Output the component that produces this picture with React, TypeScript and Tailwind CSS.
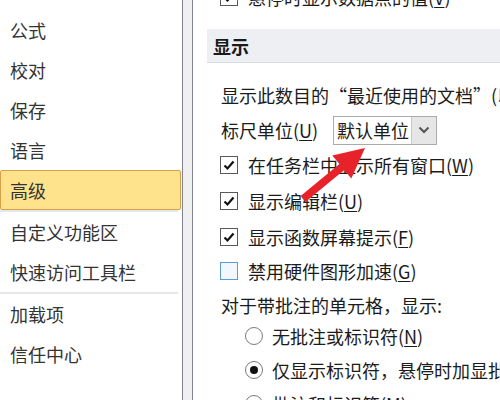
import React from "react";

const navGroups = [
  ["公式", "校对", "保存", "语言", "高级"],
  ["自定义功能区", "快速访问工具栏"],
  ["加载项", "信任中心"],
];

const Hotkey = ({ k }: { k: string }) => (
  <>
    (<span className="underline underline-offset-2">{k}</span>)
  </>
);

const CheckBox = ({ checked }: { checked: boolean }) =>
  checked ? (
    <span className="flex h-[18px] w-[18px] shrink-0 items-center justify-center border border-[#5a5a5a] bg-white">
      <svg width="12" height="12" viewBox="0 0 12 12">
        <path d="M1.5 6.5 L4.5 9.5 L10.5 2.5" fill="none" stroke="#111" strokeWidth="2.2" />
      </svg>
    </span>
  ) : (
    <span className="h-[18px] w-[18px] shrink-0 border border-[#5b9bd5] bg-[#f2f7fd]" />
  );

const Radio = ({ on }: { on?: boolean }) => (
  <span className="flex h-[18px] w-[18px] shrink-0 items-center justify-center rounded-full border border-[#7a7a7a] bg-white">
    {on && <span className="h-[8px] w-[8px] rounded-full bg-[#111]" />}
  </span>
);

function CheckRow({ checked, children }: { checked: boolean; children: React.ReactNode }) {
  return (
    <div className="flex h-[36px] items-center gap-[10px] pl-[27px]">
      <CheckBox checked={checked} />
      <span className="whitespace-nowrap">{children}</span>
    </div>
  );
}

function RadioRow({ on, children }: { on?: boolean; children: React.ReactNode }) {
  return (
    <div className="flex h-[34px] items-center gap-[9px] pl-[52px]">
      <Radio on={on} />
      <span className="whitespace-nowrap">{children}</span>
    </div>
  );
}

export default function App() {
  return (
    <div
      className="relative flex h-[400px] w-[500px] overflow-hidden bg-white text-[18px] leading-none text-[#1b1b1b]"
      style={{ fontFamily: '"Noto Sans CJK SC", "Noto Sans", sans-serif' }}
    >
      {/* left nav */}
      <div className="w-[182px] shrink-0 pt-[10px]">
        {navGroups.map((group, gi) => (
          <div key={gi}>
            {gi > 0 && <div className="mr-[4px] h-[2px] bg-[#e6e7ea]" />}
            {group.map((item) => (
              <div
                key={item}
                className={
                  item === "高级"
                    ? "mr-[1px] flex h-[40px] items-center rounded-[2px] border border-[#d9a04a] bg-[#ffe38c] pl-[9px] text-[#333]"
                    : "flex h-[40px] items-center pl-[10px] text-[#333]"
                }
              >
                {item}
              </div>
            ))}
          </div>
        ))}
      </div>

      {/* splitter */}
      <div className="w-[11px] shrink-0 border-x border-[#80848c] bg-[#f0f0f0]" />

      {/* options */}
      <div className="min-w-0 flex-1 overflow-hidden">
        <div className="-mt-[21px]">
          <CheckRow checked>
            悬停时显示数据点的值<Hotkey k="V" />
          </CheckRow>
        </div>

        <div className="ml-[14px] mt-[14px] flex h-[34px] items-center border-b border-[#dcdde1] bg-[#eeeff3] pl-[6px] font-bold">
          显示
        </div>

        <div className="mt-[14px] flex h-[36px] items-center whitespace-nowrap pl-[28px]">
          显示此数目的“最近使用的文档”(以
        </div>

        <div className="flex h-[34px] items-center pl-[28px]">
          <span className="w-[112px] shrink-0 whitespace-nowrap">
            标尺单位<Hotkey k="U" />
          </span>
          <div className="flex h-[29px] w-[104px] border border-[#ababab] bg-white">
            <span className="flex flex-1 items-center whitespace-nowrap pl-[3px]">默认单位</span>
            <span className="flex w-[25px] items-center justify-center border-l border-[#c8c8c8] bg-[#e6e6e6]">
              <svg width="12" height="8" viewBox="0 0 12 8">
                <path d="M1.5 1.5 L6 6 L10.5 1.5" fill="none" stroke="#555" strokeWidth="2" />
              </svg>
            </span>
          </div>
        </div>

        <CheckRow checked>
          在任务栏中显示所有窗口<Hotkey k="W" />
        </CheckRow>
        <CheckRow checked>
          显示编辑栏<Hotkey k="U" />
        </CheckRow>
        <CheckRow checked>
          显示函数屏幕提示<Hotkey k="F" />
        </CheckRow>
        <div className="-mt-[2px]">
          <CheckRow checked={false}>
            禁用硬件图形加速<Hotkey k="G" />
          </CheckRow>
        </div>

        <div className="flex h-[30px] items-center whitespace-nowrap pl-[28px] pt-[2px]">
          对于带批注的单元格，显示:
        </div>
        <RadioRow>
          无批注或标识符<Hotkey k="N" />
        </RadioRow>
        <RadioRow on>仅显示标识符，悬停时加显批注</RadioRow>
        <RadioRow>
          批注和标识符<Hotkey k="M" />
        </RadioRow>
      </div>

      {/* red pointer arrow */}
      <svg className="pointer-events-none absolute left-0 top-0" width="500" height="400">
        <polygon
          points="365,148 351.3,178.6 344.2,169.9 305.4,201.9 300.6,196.1 339.4,164.1 332.3,155.4"
          fill="#e8222a"
        />
      </svg>
    </div>
  );
}
